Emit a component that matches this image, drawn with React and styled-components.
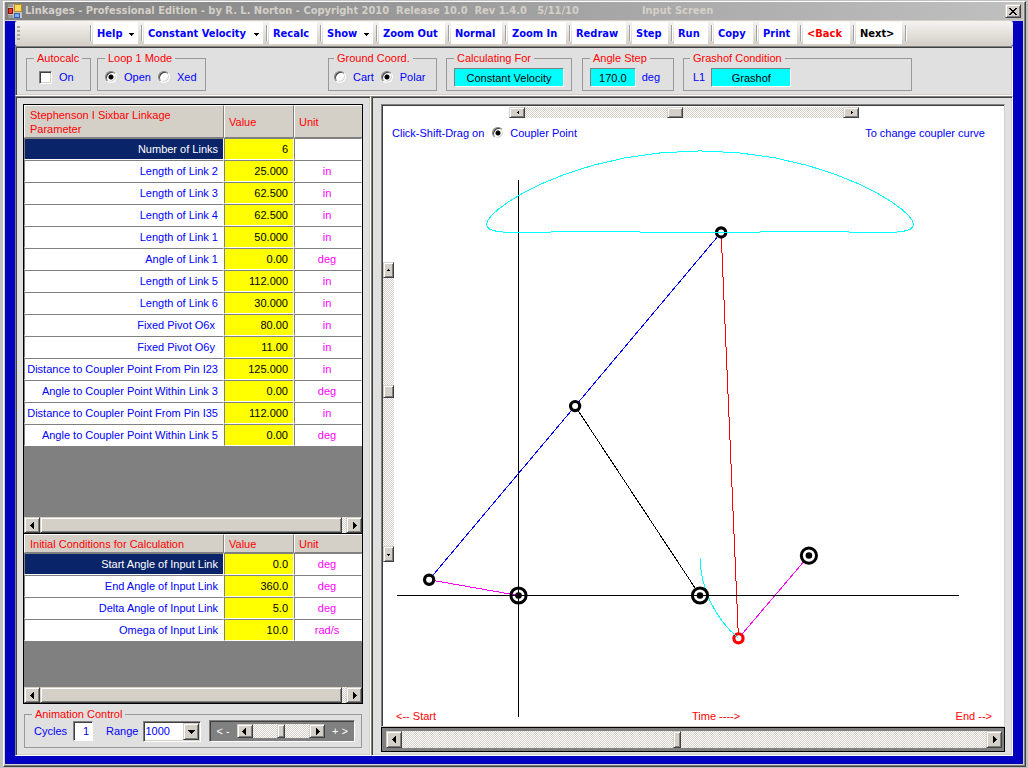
import React from "react";
import styled, { createGlobalStyle, css } from "styled-components";

const face = "#d4d0c8";
const panel = "#e0e0e0";

const GlobalStyle = createGlobalStyle`
  * { box-sizing: border-box; }
  body {
    margin: 0;
    background: #c0c0c0;
    color: #0000ff;
    font: 11px/14px "Liberation Sans", Arial, sans-serif;
  }
  button, input, select, output { font: inherit; color: inherit; margin: 0; }
`;

const raised = css`
  background: ${face};
  border: 1px solid;
  border-color: ${face} #404040 #404040 ${face};
  box-shadow: inset 1px 1px #fff, inset -1px -1px #808080;
`;

const checker = css`
  background: repeating-conic-gradient(#fff 0 25%, ${face} 0 50%) 0 0 / 2px 2px;
`;

/* ---------- window frame ---------- */

const Window = styled.div`
  min-height: 100vh;
  display: flex;
  flex-direction: column;
  padding: 1px 2px 1px 3px;
`;

const Frame = styled.div`
  flex: 1;
  display: flex;
  flex-direction: column;
  background: ${face};
  border: 1px solid;
  border-color: #fff #404040 #404040 #fff;
  box-shadow: inset -1px -1px #808080;
  padding: 0 2px 2px 1px;
`;

const TitleBar = styled.header`
  display: flex;
  align-items: center;
  height: 18px;
  padding: 0 2px 0 3px;
  background: linear-gradient(to right, #808080, #c0c0c0);
  color: ${face};
  font: bold 11px/18px "DejaVu Sans Condensed", "DejaVu Sans", Tahoma, sans-serif;
  white-space: pre;
`;

const TitleText = styled.h1`
  font: inherit;
  margin: 0 0 0 3px;
`;

const ScreenName = styled.span`
  flex: 1;
  margin-left: 63px;
`;

const CloseButton = styled.button`
  ${raised}
  width: 16px;
  height: 14px;
  padding: 0;
  display: flex;
  align-items: center;
  justify-content: center;
`;

const Client = styled.div`
  flex: 1;
  display: flex;
  flex-direction: column;
  margin-top: 1px;
  padding: 0 10px 8px;
  background: #0000c0;
`;

/* ---------- toolbar ---------- */

const Toolbar = styled.nav`
  display: flex;
  align-items: center;
  height: 25px;
  padding-left: 2px;
  background: linear-gradient(#f5f4f1, ${face});
  border-radius: 2px;
  border-bottom: 1px solid ${face};
  font: bold 11px/14px "DejaVu Sans Condensed", "DejaVu Sans", Tahoma, sans-serif;
`;

const Grip = styled.div`
  width: 3px;
  height: 15px;
  margin-right: 70px;
  background: repeating-linear-gradient(#a8a59e 0 2px, transparent 2px 4px);
`;

const Separator = styled.div`
  width: 2px;
  height: 16px;
  margin-right: 1px;
  border-left: 1px solid #a0a0a0;
  border-right: 1px solid #fff;
`;

const ToolButton = styled.button`
  width: ${(p) => p.$width}px;
  height: 22px;
  margin-right: 3px;
  padding: 2px 4px 0;
  border: 0;
  background: #fff;
  color: ${(p) => p.$color || "#0000ff"};
  display: flex;
  align-items: center;
  justify-content: space-between;
  white-space: nowrap;
`;

/* ---------- panels and groups ---------- */

const sunkenPanel = css`
  background: ${panel};
  border: 1px solid;
  border-color: #808080 #fff #fff #808080;
  box-shadow: inset 1px 1px #404040, inset -1px -1px ${face};
`;

const OptionsPanel = styled.section`
  ${sunkenPanel}
  display: flex;
  align-items: flex-start;
  height: 50px;
  padding: 5px 11px 0 10px;
`;

const Spacer = styled.div`
  flex: 0 1 ${(p) => p.$width}px;
`;

const Group = styled.fieldset`
  display: flex;
  align-items: center;
  width: ${(p) => (p.$width ? `${p.$width}px` : "auto")};
  height: ${(p) => p.$height || 39}px;
  min-width: 0;
  margin: 0 ${(p) => p.$gap || 0}px 0 ${(p) => p.$before || 0}px;
  padding: 0 ${(p) => p.$pad || 7}px;
  border: 1px solid #999;
  white-space: nowrap;
`;

const Legend = styled.legend`
  color: #ff0000;
  line-height: 12px;
  padding: 0 3px;
  margin-left: ${(p) => p.$indent || 0}px;
`;

const Option = styled.label`
  display: flex;
  align-items: center;
  gap: 7px;
  margin-right: 7px;
`;

const CheckBox = styled.input`
  appearance: none;
  width: 13px;
  height: 13px;
  background: #fff;
  border: 1px solid;
  border-color: #808080 #fff #fff #808080;
  box-shadow: inset 1px 1px #404040, inset -1px -1px ${face};
`;

const Radio = styled.input`
  appearance: none;
  width: 12px;
  height: 12px;
  flex: none;
  border-radius: 50%;
  border: 1px solid;
  border-color: #808080 #fff #fff #808080;
  box-shadow: inset 1px 1px #404040, inset -1px -1px ${face};
  background: #fff;
  &:checked {
    background: radial-gradient(circle, #000 0 2px, #fff 3px);
  }
`;

const Readout = styled.output`
  width: ${(p) => p.$width}px;
  height: 19px;
  line-height: 18px;
  text-align: center;
  color: #000;
  background: #00ffff;
  border: 1px solid;
  border-color: #808080 #fff #fff #808080;
`;

const UnitText = styled.span`
  margin: 0 6px;
`;

/* ---------- workspace ---------- */

const Workspace = styled.main`
  flex: 1;
  display: flex;
`;

const Sidebar = styled.section`
  ${sunkenPanel}
  flex: none;
  width: 356px;
  display: flex;
  flex-direction: column;
  padding: 7px;
`;

const GridWell = styled.div`
  flex: ${(p) => (p.$grow ? "1 0 auto" : "none")};
  min-height: ${(p) => p.$min}px;
  display: flex;
  flex-direction: column;
  justify-content: space-between;
  background: #808080;
  border: 1px solid #000;
  border-top-width: ${(p) => (p.$joined ? 0 : 1)}px;
`;

const DataGrid = styled.table`
  width: 100%;
  table-layout: fixed;
  border-collapse: separate;
  border-spacing: 0;
`;

const HeadCell = styled.th`
  height: ${(p) => p.$height}px;
  width: ${(p) => p.$width || "auto"};
  padding: 0 4px;
  text-align: left;
  font-weight: normal;
  color: #ff0000;
  background: ${face};
  border-left: 1px solid #fff;
  border-top: 1px solid #fff;
  border-right: 1px solid #808080;
  border-bottom: 1px solid #808080;
  &:first-child { padding-left: 5px; }
  &:last-child { border-right: 0; }
`;

const cell = css`
  height: 22px;
  padding: 0 5px 0 0;
  font-weight: normal;
  white-space: nowrap;
  border: 1px solid;
  border-color: #808080 #fff #fff #808080;
`;

const NameCell = styled.th`
  ${cell}
  text-align: right;
  color: ${(p) => (p.$selected ? "#fff" : "#0000ff")};
  background: ${(p) => (p.$selected ? "#0a246a" : "#fff")};
`;

const ValueCell = styled.td`
  ${cell}
  text-align: right;
  color: #000;
  background: #ffff00;
`;

const UnitCell = styled.td`
  ${cell}
  padding: 0 2px 0 0;
  text-align: center;
  color: #ff00ff;
  background: #fff;
`;

/* ---------- scroll bars ---------- */

const Bar = styled.div`
  display: flex;
  flex-direction: ${(p) => (p.$vertical ? "column" : "row")};
  width: ${(p) => (p.$width ? `${p.$width}px` : "auto")};
  height: ${(p) => p.$height}px;
  flex: ${(p) => (p.$fill ? "1" : "none")};
  margin: ${(p) => p.$margin || "0"};
  min-width: 0;
`;

const BarButton = styled.button`
  ${raised}
  flex: 0 0 16px;
  padding: 0;
  min-width: 0;
  min-height: 0;
  display: flex;
  align-items: center;
  justify-content: center;
`;

const BarTrack = styled.input`
  ${checker}
  appearance: none;
  flex: 1;
  width: 100%;
  min-width: 0;
  min-height: 0;
  writing-mode: ${(p) => (p.$vertical ? "vertical-lr" : "horizontal-tb")};
  height: ${(p) => (p.$vertical ? "auto" : "100%")};
  &::-webkit-slider-thumb {
    ${raised}
    appearance: none;
    border-radius: 0;
    width: ${(p) => (p.$vertical ? `${p.$across}px` : p.$thumb)};
    height: ${(p) => (p.$vertical ? p.$thumb : `${p.$across}px`)};
  }
`;

const arrows = {
  left: ["M4 0h1v7h-1zM3 1h1v5h-1zM2 2h1v3h-1zM1 3h1v1h-1z", "M4 2h1v3h-1zM3 3h1v1h-1z"],
  right: ["M2 0h1v7h-1zM3 1h1v5h-1zM4 2h1v3h-1zM5 3h1v1h-1z", "M3 2h1v3h-1zM4 3h1v1h-1z"],
  up: ["M0 5h7v-1h-7zM1 4h5v-1h-5zM2 3h3v-1h-3zM3 2h1v-1h-1z", "M2 4h3v-1h-3zM3 3h1v-1h-1z"],
  down: ["M0 2h7v1h-7zM1 3h5v1h-5zM2 4h3v1h-3zM3 5h1v1h-1z", "M2 3h3v1h-3zM3 4h1v1h-1z"],
};

function Arrow({ dir, tiny }) {
  return (
    <svg width="7" height="7" viewBox="0 0 7 7" shapeRendering="crispEdges" aria-hidden="true">
      <path d={arrows[dir][tiny ? 1 : 0]} fill="#000" />
    </svg>
  );
}

function ScrollBar({ label, value, thumb, vertical, width, height, margin, fill, tiny }) {
  return (
    <Bar $vertical={vertical} $width={width} $height={height} $margin={margin} $fill={fill}>
      <BarButton aria-label={`${label} back`}>
        <Arrow dir={vertical ? "up" : "left"} tiny={tiny} />
      </BarButton>
      <BarTrack
        type="range"
        aria-label={label}
        defaultValue={value}
        $vertical={vertical}
        $thumb={thumb}
        $across={vertical ? width : height}
      />
      <BarButton aria-label={`${label} forward`}>
        <Arrow dir={vertical ? "down" : "right"} tiny={tiny} />
      </BarButton>
    </Bar>
  );
}

/* ---------- animation controls ---------- */

const Field = styled.label`
  display: flex;
  align-items: center;
  gap: ${(p) => p.$gap}px;
  margin-right: ${(p) => p.$after}px;
`;

const CyclesInput = styled.input`
  width: 20px;
  height: 20px;
  padding: 0 3px;
  text-align: right;
  background: #fff;
  border: 1px solid;
  border-color: #808080 #fff #fff #808080;
  box-shadow: inset 1px 1px #404040;
`;

const SelectBox = styled.span`
  display: flex;
  width: 58px;
  height: 21px;
  padding: 1px;
  background: #fff;
  border: 1px solid;
  border-color: #808080 #fff #fff #808080;
  box-shadow: inset 1px 1px #404040, inset -1px -1px ${face};
  position: relative;
`;

const RangeSelect = styled.select`
  appearance: none;
  width: 100%;
  padding: 0;
  border: 0;
  background: transparent;
`;

const SelectArrow = styled.span`
  ${raised}
  position: absolute;
  top: 1px;
  right: 1px;
  bottom: 1px;
  width: 16px;
  display: flex;
  align-items: center;
  justify-content: center;
  pointer-events: none;
`;

const SpeedBox = styled.div`
  flex: 1;
  display: flex;
  align-items: center;
  justify-content: space-between;
  gap: 7px;
  height: 22px;
  margin-right: -3px;
  padding: 0 6px;
  color: #fff;
  background: #808080;
  border: 1px solid;
  border-color: #808080 #fff #fff #808080;
  box-shadow: inset 1px 1px #404040;
`;

/* ---------- drawing area ---------- */

const Viewer = styled.section`
  ${sunkenPanel}
  flex: 1;
  min-width: 0;
  display: flex;
  flex-direction: column;
  padding: 7px 7px 3px 9px;
`;

const Canvas = styled.div`
  position: relative;
  flex: 1;
  min-height: 622px;
  display: flex;
  flex-direction: column;
  background: #fff;
  border: 1px solid;
  border-color: #808080 ${face} ${face} #808080;
  box-shadow: inset 1px 1px #404040;
  padding: 2px 1px 3px 1px;
`;

const Drawing = styled.svg`
  position: absolute;
  top: 1px;
  left: 1px;
  pointer-events: none;
`;

const Hints = styled.div`
  display: flex;
  align-items: center;
  margin-top: 8px;
  padding: 0 18px 0 9px;
`;

const CouplerOption = styled.label`
  display: flex;
  align-items: center;
  gap: 6px;
  flex: 1;
  margin-left: 8px;
`;

const TimeScale = styled.div`
  display: grid;
  grid-template-columns: 49% 1fr auto;
  column-gap: 4px;
  margin-top: auto;
  padding: 0 11px 0 13px;
  color: #ff0000;
`;

const TimeBar = styled.div`
  display: flex;
  align-items: center;
  height: 25px;
  padding: 0 2px 0 4px;
  background: #808080;
  border: 1px solid #000;
`;

/* ---------- linkage geometry ---------- */

const SCALE = 3.63;
const O2 = { x: 0, y: 0 };
const O4 = { x: 50, y: 0 };
const O6 = { x: 80, y: 11 };
const PIN56 = { x: 60.6, y: -11.8 };

function solve(degrees) {
  const t = (degrees * Math.PI) / 180;
  const a = { x: 25 * Math.cos(t), y: 25 * Math.sin(t) };
  const dx = O4.x - a.x;
  const dy = O4.y - a.y;
  const d = Math.hypot(dx, dy);
  const h = Math.sqrt(62.5 ** 2 - (d / 2) ** 2);
  const b = { x: a.x + dx / 2 - (dy / d) * h, y: a.y + dy / 2 + (dx / d) * h };
  return { a, b, p: { x: 2 * b.x - a.x, y: 2 * b.y - a.y } };
}

const px = (pt) => [135.5 + pt.x * SCALE, 489.5 - pt.y * SCALE];

const couplerCurve = Array.from({ length: 73 }, (_, i) => px(solve(i * 5).p).join(",")).join(" ");

function Link({ from, to, color }) {
  const [x1, y1] = px(from);
  const [x2, y2] = px(to);
  return <line x1={x1} y1={y1} x2={x2} y2={y2} stroke={color} />;
}

function Pin({ at, color = "#000" }) {
  const [cx, cy] = px(at);
  return (
    <circle cx={cx} cy={cy} r="4.6" fill="#fff" stroke={color} strokeWidth="3.2" shapeRendering="auto" />
  );
}

function GroundPivot({ at, clear }) {
  const [cx, cy] = px(at);
  return (
    <g shapeRendering="auto">
      <circle cx={cx} cy={cy} r="7.6" fill={clear ? "#fff" : "none"} stroke="#000" strokeWidth="3" />
      <circle cx={cx} cy={cy} r="3.3" fill="#000" />
    </g>
  );
}

function Linkage() {
  const { a, b, p } = solve(170);
  const [ex, ey] = px(PIN56);
  const [ox, oy] = px(O6);
  return (
    <Drawing width="620" height="620" viewBox="0 0 620 620" role="img" aria-label="Sixbar linkage">
      <g shapeRendering="crispEdges">
        <line x1="135.5" y1="74" x2="135.5" y2="611" stroke="#000" />
        <Link from={a} to={p} color="#0000ff" />
        <Link from={O2} to={a} color="#ff00ff" />
        <Link from={O4} to={b} color="#000" />
        <Link from={p} to={PIN56} color="#ff0000" />
        <Link from={O6} to={PIN56} color="#ff00ff" />
        <Pin at={a} />
        <Pin at={b} />
        <Pin at={p} />
        <Pin at={PIN56} color="#ff0000" />
        <polyline points={couplerCurve} fill="none" stroke="#00ffff" />
        <path
          d={`M${ox - 108.9} ${oy + 2}A108.9 108.9 0 0 0 ${ex} ${ey}`}
          fill="none"
          stroke="#00ffff"
        />
        <GroundPivot at={O2} />
        <GroundPivot at={O4} clear />
        <GroundPivot at={O6} clear />
        <line x1="14" y1="489.5" x2="576" y2="489.5" stroke="#000" />
      </g>
    </Drawing>
  );
}

/* ---------- data ---------- */

const tools = [
  { label: "Help", width: 45, menu: true },
  { label: "Constant Velocity", width: 119, menu: true },
  { label: "Recalc", width: 48 },
  { label: "Show", width: 50, menu: true },
  { label: "Zoom Out", width: 66 },
  { label: "Normal", width: 51 },
  { label: "Zoom In", width: 58 },
  { label: "Redraw", width: 54 },
  { label: "Step", width: 36 },
  { label: "Run", width: 34 },
  { label: "Copy", width: 39 },
  { label: "Print", width: 38 },
  { label: "<Back", width: 47, color: "#ff0000" },
  { label: "Next>", width: 46, color: "#000" },
];

const parameters = [
  ["Number of Links", "6", ""],
  ["Length of Link 2", "25.000", "in"],
  ["Length of Link 3", "62.500", "in"],
  ["Length of Link 4", "62.500", "in"],
  ["Length of Link 1", "50.000", "in"],
  ["Angle of Link 1", "0.00", "deg"],
  ["Length of Link 5", "112.000", "in"],
  ["Length of Link 6", "30.000", "in"],
  ["Fixed Pivot O6x\u00a0", "80.00", "in"],
  ["Fixed Pivot O6y\u00a0", "11.00", "in"],
  ["Distance to Coupler Point From Pin I23", "125.000", "in"],
  ["Angle to Coupler Point Within Link 3", "0.00", "deg"],
  ["Distance to Coupler Point From Pin I35", "112.000", "in"],
  ["Angle to Coupler Point Within Link 5", "0.00", "deg"],
];

const conditions = [
  ["Start Angle of Input Link", "0.0", "deg"],
  ["End Angle of Input Link", "360.0", "deg"],
  ["Delta Angle of Input Link", "5.0", "deg"],
  ["Omega of Input Link", "10.0", "rad/s"],
];

function Grid({ title, rows, headHeight }) {
  return (
    <DataGrid>
      <thead>
        <tr>
          <HeadCell $height={headHeight} $width="200px">{title}</HeadCell>
          <HeadCell $width="70px">Value</HeadCell>
          <HeadCell>Unit</HeadCell>
        </tr>
      </thead>
      <tbody>
        {rows.map(([name, value, unit], i) => (
          <tr key={name}>
            <NameCell scope="row" $selected={i === 0}>{name}</NameCell>
            <ValueCell>{value}</ValueCell>
            <UnitCell>{unit}</UnitCell>
          </tr>
        ))}
      </tbody>
    </DataGrid>
  );
}

function AppIcon() {
  return (
    <svg width="14" height="14" viewBox="0 0 14 14" shapeRendering="crispEdges" aria-hidden="true">
      <rect width="14" height="14" fill="#c8c4bc" />
      <rect x="0" y="4" width="5" height="6" fill="#8c1010" />
      <rect x="1" y="5" width="3" height="4" fill="#e04028" />
      <rect x="6" y="0" width="8" height="8" fill="#b88a20" />
      <rect x="7" y="1" width="6" height="6" fill="#ffd860" />
      <rect x="6" y="9" width="6" height="5" fill="#3060c0" />
      <rect x="7" y="10" width="4" height="3" fill="#78b0f8" />
      <path d="M0 0h5v3h-5zM0 11h5v3h-5z" fill="#999" />
    </svg>
  );
}

export default function App() {
  return (
    <Window>
      <GlobalStyle />
      <Frame>
        <TitleBar>
          <AppIcon />
          <TitleText>
            {"Linkages - Professional Edition - by R. L. Norton - Copyright 2010  Release 10.0  Rev 1.4.0   5/11/10"}
          </TitleText>
          <ScreenName>Input Screen</ScreenName>
          <CloseButton aria-label="Close">
            <svg width="8" height="7" viewBox="0 0 8 7" shapeRendering="crispEdges" aria-hidden="true">
              <path
                d="M0 0h2v1h-2zM6 0h2v1h-2zM1 1h2v1h-2zM5 1h2v1h-2zM2 2h4v1h-4zM3 3h2v1h-2zM2 4h4v1h-4zM1 5h2v1h-2zM5 5h2v1h-2zM0 6h2v1h-2zM6 6h2v1h-2z"
                fill="#000"
              />
            </svg>
          </CloseButton>
        </TitleBar>
        <Client>
          <Toolbar>
            <Grip />
            {tools.map((t) => (
              <React.Fragment key={t.label}>
                <Separator />
                <ToolButton $width={t.width} $color={t.color}>
                  {t.label}
                  {t.menu && (
                    <svg width="5" height="3" viewBox="0 0 5 3" shapeRendering="crispEdges" aria-hidden="true">
                      <path d="M0 0h5v1h-5zM1 1h3v1h-3zM2 2h1v1h-1z" fill="#000" />
                    </svg>
                  )}
                </ToolButton>
              </React.Fragment>
            ))}
            <Separator />
          </Toolbar>

          <OptionsPanel>
            <Group $width={65} $gap={6} $pad={12}>
              <Legend $indent={-5}>Autocalc</Legend>
              <Option><CheckBox type="checkbox" />On</Option>
            </Group>
            <Group $width={109}>
              <Legend>Loop 1 Mode</Legend>
              <Option><Radio type="radio" name="mode" defaultChecked />Open</Option>
              <Option><Radio type="radio" name="mode" />Xed</Option>
            </Group>
            <Spacer $width={122} />
            <Group $width={109} $gap={9} $pad={5}>
              <Legend>Ground Coord.</Legend>
              <Option><Radio type="radio" name="ground" />Cart</Option>
              <Option><Radio type="radio" name="ground" defaultChecked />Polar</Option>
            </Group>
            <Group $width={126} $gap={10}>
              <Legend>Calculating For</Legend>
              <Readout $width={110}>Constant Velocity</Readout>
            </Group>
            <Group $width={92} $gap={9}>
              <Legend>Angle Step</Legend>
              <Readout $width={50}>170.0</Readout>
              <UnitText>deg</UnitText>
            </Group>
            <Group $width={229} $pad={3}>
              <Legend $indent={3}>Grashof Condition</Legend>
              <UnitText>L1</UnitText>
              <Readout $width={80}>Grashof</Readout>
            </Group>
          </OptionsPanel>

          <Workspace>
            <Sidebar>
              <GridWell $grow $min={430}>
                <Grid title={<>Stephenson I Sixbar Linkage<br />Parameter</>} rows={parameters} headHeight={33} />
                <ScrollBar label="Scroll parameters" value={0} thumb="calc(100% - 4px)" height={16} />
              </GridWell>
              <GridWell $joined $min={170}>
                <Grid title="Initial Conditions for Calculation" rows={conditions} headHeight={19} />
                <ScrollBar label="Scroll conditions" value={0} thumb="calc(100% - 4px)" height={16} />
              </GridWell>
              <Spacer $width={4} />
              <Group $pad={9} $gap={1} $before={1} $height={40}>
                <Legend $indent={-2}>Animation Control</Legend>
                <Field $gap={6} $after={13}>
                  Cycles
                  <CyclesInput type="text" defaultValue="1" />
                </Field>
                <Field $gap={5} $after={8}>
                  Range
                  <SelectBox>
                    <RangeSelect defaultValue="1000">
                      <option>1000</option>
                    </RangeSelect>
                    <SelectArrow><Arrow dir="down" /></SelectArrow>
                  </SelectBox>
                </Field>
                <SpeedBox>
                  <span>&lt; -</span>
                  <ScrollBar label="Animation speed" value={50} thumb="8px" height={14} fill />
                  <span>+ &gt;</span>
                </SpeedBox>
              </Group>
            </Sidebar>

            <Viewer>
              <Canvas>
                <Linkage />
                <ScrollBar label="Pan" value={47} thumb="16px" width={350} height={11} margin="0 0 0 126px" tiny />
                <Hints>
                  Click-Shift-Drag on
                  <CouplerOption>
                    <Radio type="radio" name="drag" defaultChecked />
                    Coupler Point
                  </CouplerOption>
                  To change coupler curve
                </Hints>
                <ScrollBar label="Tilt" value={42} thumb="13px" width={11} height={300} margin="122px 0 0" vertical tiny />
                <TimeScale>
                  <span>&lt;-- Start</span>
                  <span>Time ----&gt;</span>
                  <span>End --&gt;</span>
                </TimeScale>
              </Canvas>
              <TimeBar>
                <ScrollBar label="Time" value={47} thumb="8px" height={17} fill />
              </TimeBar>
            </Viewer>
          </Workspace>
        </Client>
      </Frame>
    </Window>
  );
}
